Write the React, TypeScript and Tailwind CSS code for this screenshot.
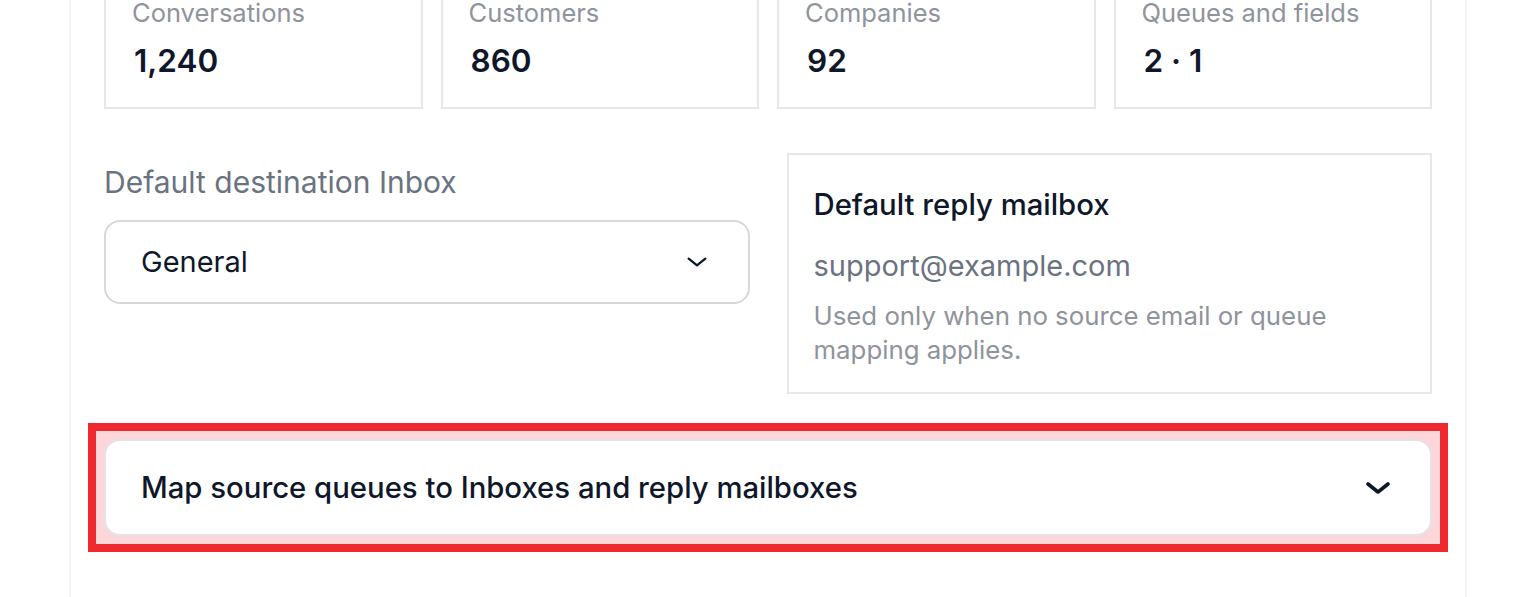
const STATS = [
  { label: 'Conversations', value: '1,240' },
  { label: 'Customers', value: '860' },
  { label: 'Companies', value: '92' },
  { label: 'Queues and fields', value: '2 · 1' },
];

function ChevronDown({ className, strokeWidth = 2.5 }: { className?: string; strokeWidth?: number }) {
  return (
    <svg viewBox="0 0 24 12" fill="none" stroke="currentColor" strokeWidth={strokeWidth} strokeLinecap="round" strokeLinejoin="round" className={className}>
      <path d="M2 2l10 8 10-8" />
    </svg>
  );
}

function StatCard({ label, value }: { label: string; value: string }) {
  return (
    <div className="border-2 border-[#e5e7eb] bg-white px-[26px] pt-[28px] pb-[28px]">
      <div className="text-[25.5px] leading-[32px] text-[#8f939c]">{label}</div>
      <div className="mt-[14px] pl-[2px] text-[31.5px] leading-[36px] font-semibold text-[#0f172a]">{value}</div>
    </div>
  );
}

export default function App() {
  return (
    <div className="min-h-screen overflow-hidden bg-white font-['Inter','Noto_Sans',sans-serif]">
      <div className="mx-auto flex min-h-[597px] w-[1398px] flex-col border-x-2 border-[#f4f5f7] px-[33px]">
        {/* stats row */}
        <div className="-mt-[33px] grid grid-cols-4 gap-[18px]">
          {STATS.map((s) => (
            <StatCard key={s.label} label={s.label} value={s.value} />
          ))}
        </div>

        {/* defaults */}
        <div className="mt-[44px] grid grid-cols-2 gap-[37px]">
          <div className="pt-[13px]">
            <div className="text-[30px] leading-[32px] text-[#6b7280]">Default destination Inbox</div>
            <button className="mt-[22px] flex h-[84px] w-full items-center justify-between rounded-[16px] border-2 border-[#d6d8dc] bg-white pl-[35px] pr-[41px] text-left">
              <span className="text-[29px] text-[#0f172a]">General</span>
              <ChevronDown className="h-[10px] w-[20px] text-[#0f172a]" strokeWidth={2.8} />
            </button>
          </div>

          <div className="border-2 border-[#e5e7eb] bg-white px-[25px] pt-[32px] pb-[25px]">
            <div className="text-[29.3px] leading-[36px] font-medium text-[#0f172a]">Default reply mailbox</div>
            <div className="mt-[25px] text-[29px] leading-[36px] text-[#6b7280]">support@example.com</div>
            <p className="mt-[15px] text-[25.8px] leading-[34px] text-[#8f939c]">
              Used only when no source email or queue mapping applies.
            </p>
          </div>
        </div>

        {/* queue mapping accordion (highlighted) */}
        <div className="-mx-[16px] mt-[29px] border-[8px] border-[#ee2a30] bg-[#fcd6d8] p-[8px]">
          <button className="flex h-[97px] w-full items-center justify-between rounded-[16px] border-2 border-[#e3e4e7] bg-white pl-[35px] pr-[40px] text-left">
            <span className="text-[29.3px] font-medium text-[#0f172a]">Map source queues to Inboxes and reply mailboxes</span>
            <ChevronDown className="h-[14px] w-[24px] text-[#0f172a]" strokeWidth={3.6} />
          </button>
        </div>
      </div>
    </div>
  );
}
